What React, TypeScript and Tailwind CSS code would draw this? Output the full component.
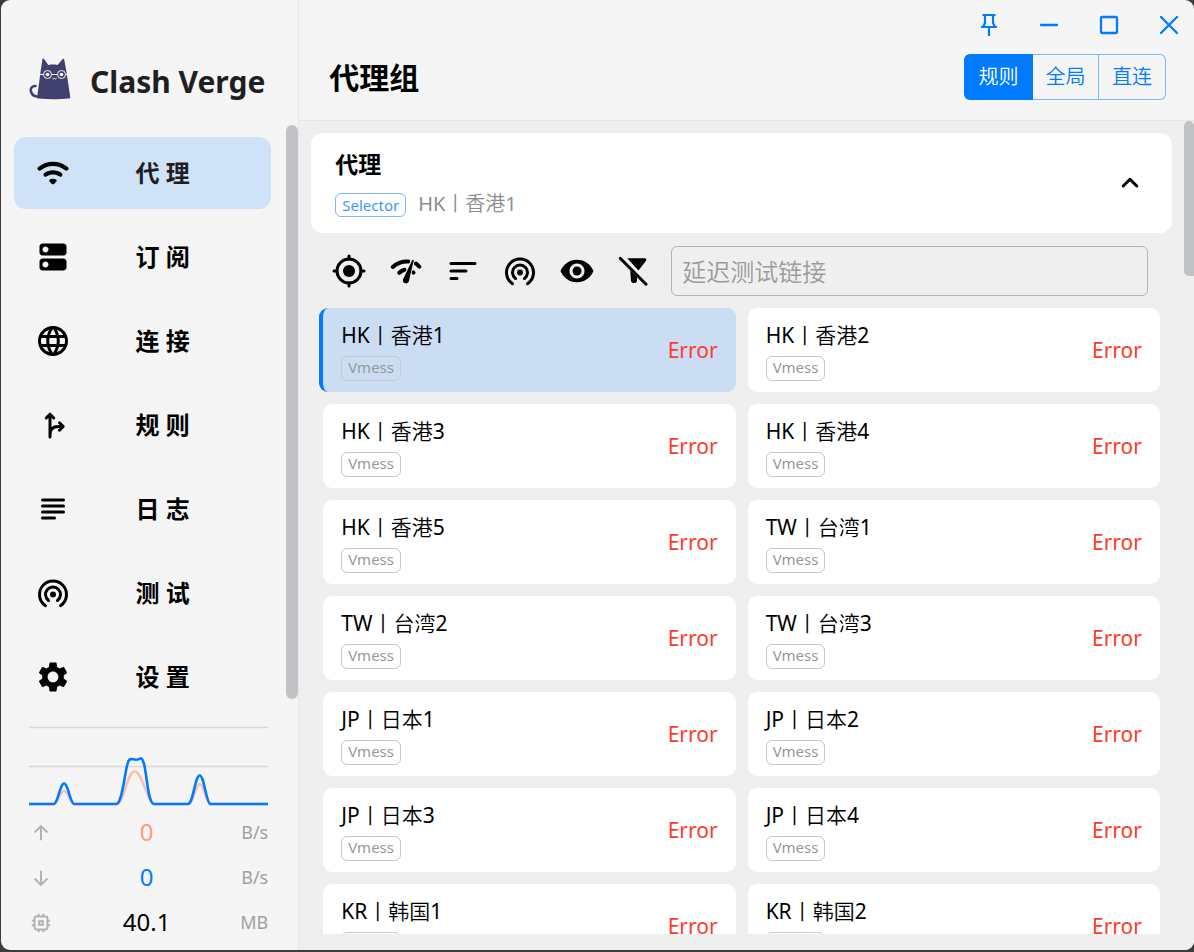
import type { ReactNode } from "react";
import { MdLanguage, MdSettings, MdVisibility } from "react-icons/md";

type IconProps = { className?: string };

const WINDOW_BUTTON = "flex h-[50px] w-[60px] items-center justify-center";

function LogoCat() {
  return (
    <svg viewBox="0 0 42 42" className="size-[42px] shrink-0" aria-hidden="true">
      <path d="M13.500 .8c.5-.5 1.200-.3 1.600.3l4.200 5.900c3.100-.6 6.200-.6 9.200 0l5.200-6c.6-.6 1.300-.4 1.500.4L37.500 14l3.800 25.300c-.1 1-1 1.300-2 1.300-9 .9-20 .9-29.500 0-1.100 0-1.700-.6-1.600-1.600L11.500 14z" fill="#42406f" />
      <path d="M6.500 28C3 27.800 1.200 30.500 2 33.600 3 37.600 6 38.800 11 38.800" fill="none" stroke="#42406f" strokeWidth="2.600" strokeLinecap="round" />
      <g fill="none" stroke="#f5f5f5" strokeWidth="1">
        <circle cx="18.500" cy="16.500" r="4" />
        <circle cx="32.500" cy="16.500" r="4" />
        <path d="M11 16.500h3.500M22.500 16.500h6M36.500 16.500H39M23.500 20.300q1 1.200 2 .2q1 1 2-.2" />
      </g>
      <circle cx="18.500" cy="16.500" r="1.800" fill="#fff" />
      <circle cx="32.500" cy="16.500" r="1.800" fill="#fff" />
    </svg>
  );
}

function StrokeIcon({ className = "size-9", width = 2, children }: IconProps & { width?: number; children: ReactNode }) {
  return (
    <svg viewBox="0 0 24 24" className={className} fill="none" stroke="currentColor" strokeWidth={width} strokeLinecap="round" strokeLinejoin="round" aria-hidden="true">
      {children}
    </svg>
  );
}

function WifiIcon() {
  return (
    <svg viewBox="0 0 24 24" className="size-9" fill="currentColor" aria-hidden="true">
      <path d="M2.060 10.060c.51.51 1.320.56 1.870.1 4.670-3.840 11.450-3.840 16.130-.01.56.46 1.380.42 1.890-.09.59-.59.55-1.570-.1-2.100-5.710-4.670-13.970-4.670-19.690 0-.65.52-.7 1.500-.1 2.100zm7.760 7.760 1.470 1.470c.39.39 1.020.39 1.410 0l1.470-1.470c.47-.47.37-1.280-.23-1.590-1.220-.63-2.680-.63-3.910 0-.57.31-.68 1.120-.21 1.590zm-3.730-3.730c.49.49 1.260.54 1.830.13 2.440-1.730 5.720-1.730 8.160 0 .57.4 1.340.36 1.830-.13l.01-.01c.6-.6.56-1.620-.13-2.110-3.440-2.490-8.130-2.490-11.580 0-.69.5-.73 1.510-.12 2.120z" />
    </svg>
  );
}

function DnsIcon() {
  return (
    <svg viewBox="0 0 24 24" className="size-9" fill="currentColor" aria-hidden="true">
      <path d="M19 13H5c-1.100 0-2 .9-2 2v4c0 1.100.9 2 2 2h14c1.100 0 2-.9 2-2v-4c0-1.100-.9-2-2-2zM7 19c-1.100 0-2-.9-2-2s.9-2 2-2 2 .9 2 2-.9 2-2 2zM19 3H5c-1.100 0-2 .9-2 2v4c0 1.100.9 2 2 2h14c1.100 0 2-.9 2-2V5c0-1.100-.9-2-2-2zM7 9c-1.100 0-2-.9-2-2s.9-2 2-2 2 .9 2 2-.9 2-2 2z" />
    </svg>
  );
}

function ForkIcon() {
  return (
    <StrokeIcon>
      <path d="M10 20V5M7.500 7.300 10 4.800l2.500 2.500M10 18.500c0-3.600 2-5.500 5.500-5.500H18M16.300 10.500 18.800 13l-2.500 2.500" />
    </StrokeIcon>
  );
}

function SubjectIcon() {
  return (
    <StrokeIcon>
      <path d="M5 6h14M5 10h14M5 14h14M5 18h8" />
    </StrokeIcon>
  );
}

function TetheringIcon() {
  return (
    <StrokeIcon>
      <path d="M7 20.500A9 9 0 1 1 17 20.500M9 17A5 5 0 1 1 15 17" />
      <circle cx="12" cy="13" r="1" />
    </StrokeIcon>
  );
}

function LocationIcon() {
  return (
    <StrokeIcon>
      <circle cx="12" cy="12" r="8" />
      <circle cx="12" cy="12" r="4" fill="currentColor" stroke="none" />
      <path d="M12 2v2M12 20v2M2 12h2M20 12h2" />
    </StrokeIcon>
  );
}

function NetworkCheckIcon() {
  return (
    <svg viewBox="0 0 24 24" className="size-9" aria-hidden="true">
      <g fill="none" stroke="currentColor" strokeWidth="2.700" strokeLinecap="round">
        <path d="M3.200 9.300C6.200 6.600 9.800 5.500 13.500 5.700M18.500 7c.9.500 1.600 1.300 2.400 2.100M7.500 13.200c1.100-1.100 2.300-1.700 3.600-2M16.800 12.900l.2.200" />
      </g>
      <path d="M16.100 4.800c.3-.6 1.100-.4 1 .3l-3.200 13.700c-.3 1-1.300 1.700-2.400 1.400-1.200-.2-1.900-1.400-1.500-2.500z" fill="currentColor" stroke="#efefef" strokeWidth="1.200" paintOrder="stroke" />
    </svg>
  );
}

function SortIcon() {
  return (
    <StrokeIcon>
      <path d="M4 7h16M4 12h10M4 17h4" />
    </StrokeIcon>
  );
}

function FilterOffIcon() {
  return (
    <svg viewBox="0 0 24 24" className="size-9" fill="currentColor" aria-hidden="true">
      <path d="M7.500 3.500H19.300c.9 0 1.200.9.7 1.600l-5 6.500zM9.500 11.500l4.500 4.500V18.500c0 .8-.7 1.500-1.500 1.500h-1c-.8 0-1.500-.7-1.500-1.500z" />
      <path d="M2.800 3.500 20 20.800" fill="none" stroke="currentColor" strokeWidth="2" strokeLinecap="round" />
    </svg>
  );
}

const navItems: { label: string; icon: ReactNode; active?: boolean }[] = [
  { label: "代 理", icon: <WifiIcon />, active: true },
  { label: "订 阅", icon: <DnsIcon /> },
  { label: "连 接", icon: <MdLanguage className="size-9" /> },
  { label: "规 则", icon: <ForkIcon /> },
  { label: "日 志", icon: <SubjectIcon /> },
  { label: "测 试", icon: <TetheringIcon /> },
  { label: "设 置", icon: <MdSettings className="size-9" /> },
];

const tools: { label: string; icon: ReactNode }[] = [
  { label: "定位", icon: <LocationIcon /> },
  { label: "延迟测试", icon: <NetworkCheckIcon /> },
  { label: "排序", icon: <SortIcon /> },
  { label: "测试链接", icon: <TetheringIcon /> },
  { label: "显示详情", icon: <MdVisibility className="size-9" /> },
  { label: "过滤", icon: <FilterOffIcon /> },
];

const proxies = [
  "HK丨香港1", "HK丨香港2", "HK丨香港3", "HK丨香港4", "HK丨香港5", "TW丨台湾1", "TW丨台湾2",
  "TW丨台湾3", "JP丨日本1", "JP丨日本2", "JP丨日本3", "JP丨日本4", "KR丨韩国1", "KR丨韩国2",
];

function TrafficGraph() {
  return (
    <svg viewBox="0 0 239 80" preserveAspectRatio="none" className="block h-[80px] w-full" fill="none" aria-hidden="true">
      <path d="M0 1.500H239M0 40.500H239" stroke="#d8d8d8" strokeWidth="1.300" />
      <path d="M0 78H25C29 77 31 65 35 65S41 77 45 78H89C95 76 98 45.500 105.500 45.500S118 76 125 78H160C164 76 167 58 170.500 58S177 76 181 78H239" stroke="#ffbfae" strokeWidth="2.600" />
      <path d="M0 78H25C29 77 31 57.500 35 57.500S41 77 45 78H87C94 78 96 38 100 34C103 31 106 36 111 32.500C118 30 117 78 125 78H159C164 77 166 49.500 170.500 49.500S177 77 181 78H239" stroke="#007aff" strokeWidth="2.600" />
    </svg>
  );
}

function Sidebar() {
  return (
    <aside className="flex w-1/4 shrink-0 flex-col border-r border-[#e6e6e6]">
      <div className="flex h-[125px] shrink-0 items-center gap-[19px] pt-[37px] pl-[28px]">
        <span className="pb-1"><LogoCat /></span>
        <span className="text-[30px] font-bold whitespace-nowrap text-[#1f1f1f]">Clash Verge</span>
      </div>
      <div className="flex min-h-0 flex-1">
        <nav className="flex min-w-0 flex-1 flex-col gap-3 overflow-hidden pt-3 pr-[15px] pl-[13px]">
          {navItems.map((item) => (
            <a
              key={item.label}
              href="#"
              className={
                item.active
                  ? "flex h-[72px] shrink-0 items-center rounded-[12px] bg-[#d0e2f7] pl-[21px] text-[#1f1f1f]"
                  : "flex h-[72px] shrink-0 items-center rounded-[12px] pl-[21px] text-black"
              }
            >
              <span className="text-black">{item.icon}</span>
              <span className="flex-1 pr-[17px] text-center text-[24px] font-bold">{item.label}</span>
            </a>
          ))}
        </nav>
        <div className="h-full w-3 rounded-full bg-[#c1c2c6]" />
      </div>
      <div className="shrink-0 pt-[27px] pr-[30px] pb-[5px] pl-7">
        <div className="pb-1">
          <TrafficGraph />
        </div>
        <Stat label="上传" value="0" unit="B/s" valueClass="text-[#ff9a80]">
          <path d="M12 20V4.500M5 11.500l7-7 7 7" />
        </Stat>
        <Stat label="下载" value="0" unit="B/s" valueClass="text-[#007aff]">
          <path d="M12 4v15.500M5 12.500l7 7 7-7" />
        </Stat>
        <Stat label="内存" value="40.1" unit="MB" valueClass="text-black">
          <rect x="5" y="5" width="14" height="14" rx="1.500" />
          <rect x="10" y="10" width="4" height="4" />
          <path d="M9.500 2V5M14.500 2V5M9.500 19v3M14.500 19v3M2 9.500H5M2 14.500H5M19 9.500h3M19 14.500h3" />
        </Stat>
      </div>
    </aside>
  );
}

function Stat({ label, value, unit, valueClass, children }: { label: string; value: string; unit: string; valueClass: string; children: ReactNode }) {
  return (
    <div className="flex h-[45px] items-center" title={label}>
      <svg viewBox="0 0 24 24" className="h-[22px] w-6 shrink-0 text-[#b3b3b3]" fill="none" stroke="currentColor" strokeWidth="2.200" aria-hidden="true">
        {children}
      </svg>
      <span className={`flex-1 pb-[2px] pl-[20px] text-center text-[24px] ${valueClass}`}>{value}</span>
      <span className="w-12 text-right text-[18px] text-[#a0a0a0]">{unit}</span>
    </div>
  );
}

function ProxyCard({ name, selected }: { name: string; selected: boolean }) {
  return (
    <button
      type="button"
      className={
        selected
          ? "-ml-1 flex h-[84px] items-center rounded-[9px] border-l-4 border-[#007aff] bg-[#cbddf2] px-[18px] text-left"
          : "flex h-[84px] items-center rounded-[9px] bg-white px-[18px] text-left"
      }
    >
      <span className="flex min-w-0 flex-1 flex-col items-start gap-[6px]">
        <span className="[font-family:'Noto_Sans','Noto_Sans_CJK_SC_DemiLight','Noto_Sans_CJK_SC',sans-serif] text-[21px] leading-[30px] text-black">{name}</span>
        <span className="rounded-[6px] border border-[#c8c8c8] px-[6px] pb-[2px] text-[15px] leading-[21px] text-[#989898]">Vmess</span>
      </span>
      <span className="pt-[2px] text-[21px] text-[#ff3b30]">Error</span>
    </button>
  );
}

export default function App() {
  return (
    <div className="h-screen w-full overflow-hidden bg-[#3c3c3c] pb-[2px] pl-px [font-family:'Noto_Sans','Noto_Sans_CJK_SC',sans-serif]">
      <div className="flex h-full overflow-hidden rounded-[9px] bg-[#f5f5f5]">
        <Sidebar />
        <main className="flex min-w-0 flex-1 flex-col">
          <header className="shrink-0 border-b border-[#e4e4e4] pb-4">
            <div className="-mr-[5px] flex justify-end text-[#007aff]">
              <button type="button" aria-label="置顶" className={WINDOW_BUTTON}>
                <svg viewBox="0 0 24 24" className="size-6" fill="none" stroke="currentColor" strokeWidth="2.200" aria-hidden="true">
                  <path d="M5.500 2h13M8 2v8l-2 4M16 2v8l2 4M4 14h16M12 14v9" />
                </svg>
              </button>
              <button type="button" aria-label="最小化" className={WINDOW_BUTTON}>
                <StrokeIcon className="size-6" width={2.3}><path d="M4 12h16" /></StrokeIcon>
              </button>
              <button type="button" aria-label="最大化" className={WINDOW_BUTTON}>
                <StrokeIcon className="size-6" width={2.3}><rect x="4" y="4" width="16" height="16" rx="1" /></StrokeIcon>
              </button>
              <button type="button" aria-label="关闭" className={WINDOW_BUTTON}>
                <StrokeIcon className="size-6" width={2.3}><path d="m4 4 16 16M20 4 4 20" /></StrokeIcon>
              </button>
            </div>
            <div className="flex h-[54px] items-center justify-between pr-7 pl-[30px]">
              <h1 className="text-[30px] font-bold text-black">代理组</h1>
              <div className="flex h-[46px] text-[20px] font-[350] text-[#007aff]">
                <button type="button" className="w-[69px] rounded-l-[6px] bg-[#007aff] text-white">规则</button>
                <button type="button" className="w-[66px] border-y border-r border-[#7ab8ff]">全局</button>
                <button type="button" className="w-[67px] rounded-r-[6px] border-y border-r border-[#7ab8ff]">直连</button>
              </div>
            </div>
          </header>

          <div className="flex min-h-0 flex-1 bg-[#efefef] pb-4">
            <div className="min-w-0 flex-1 overflow-hidden px-3 pt-3">
              <section className="flex h-[100px] items-center justify-between rounded-[12px] bg-white px-6">
                <div>
                  <h2 className="text-[23px] leading-[34px] font-bold text-black">代理</h2>
                  <div className="mt-2 flex items-center gap-3">
                    <span className="mt-[2px] rounded-[6px] border border-[#7ab8ff] px-[6px] text-[15px] leading-[22px] text-[#3d97ff]">Selector</span>
                    <span className="[font-family:'Noto_Sans','Noto_Sans_CJK_SC_DemiLight','Noto_Sans_CJK_SC',sans-serif] text-[20px] leading-[30px] text-[#8e8e8e]">HK丨香港1</span>
                  </div>
                </div>
                <button type="button" aria-label="收起" className="text-black">
                  <StrokeIcon width={2}><path d="m7.500 14 4.500-4.500 4.500 4.500" /></StrokeIcon>
                </button>
              </section>

              <div className="mt-[13px] flex items-center gap-[9px] pr-3 pl-[14px] text-black">
                {tools.map((tool) => (
                  <button key={tool.label} type="button" aria-label={tool.label} className="flex w-12 items-center justify-center">
                    {tool.icon}
                  </button>
                ))}
                <input
                  type="text"
                  aria-label="延迟测试链接"
                  placeholder="延迟测试链接"
                  className="mr-3 ml-1 h-[50px] min-w-0 flex-1 rounded-[6px] border border-[#b5b5b5] bg-transparent px-[10px] text-[24px] font-[350] text-black placeholder:text-[#9b9b9b]"
                />
              </div>

              <div className="mt-3 grid grid-cols-2 gap-3 px-3">
                {proxies.map((name, index) => (
                  <ProxyCard key={name} name={name} selected={index === 0} />
                ))}
              </div>
            </div>
            <div className="h-[155px] w-[10px] shrink-0 rounded-t-full rounded-bl-full bg-[#c1c2c6]" />
          </div>
        </main>
      </div>
    </div>
  );
}
